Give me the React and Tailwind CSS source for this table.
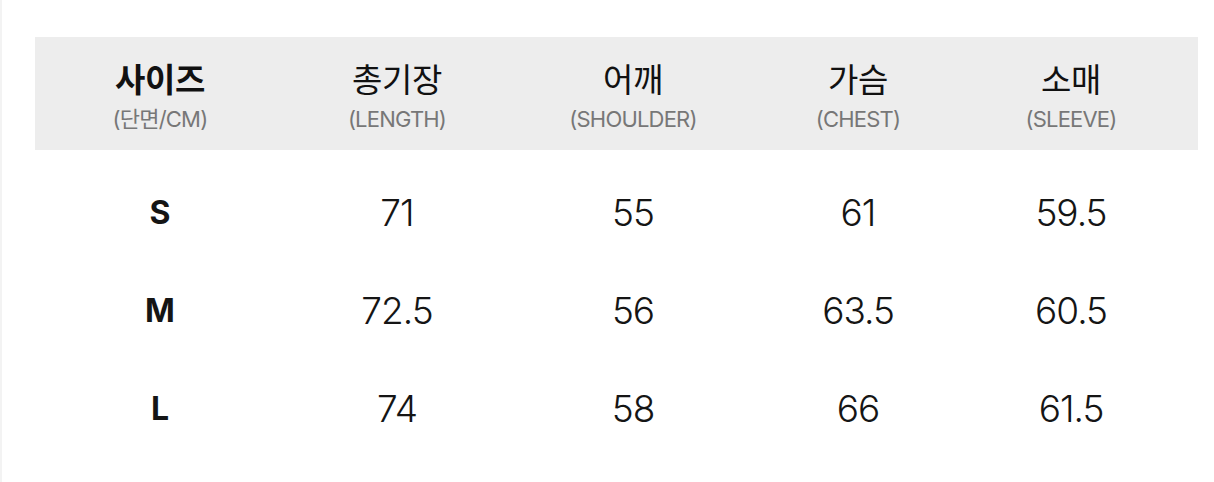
const columns = [
  { ko: '사이즈', en: '(단면/CM)', bold: true },
  { ko: '총기장', en: '(LENGTH)' },
  { ko: '어깨', en: '(SHOULDER)' },
  { ko: '가슴', en: '(CHEST)' },
  { ko: '소매', en: '(SLEEVE)' },
];

const rows = [
  ['S', '71', '55', '61', '59.5'],
  ['M', '72.5', '56', '63.5', '60.5'],
  ['L', '74', '58', '66', '61.5'],
];

const grid = 'grid grid-cols-[250px_224px_248px_202px_224px]';
const font = "font-['Inter','Noto_Sans_CJK_KR',sans-serif]";

const App = () => {
  return (
    <div className={`w-[1214px] h-[482px] bg-white border-l-2 border-[#f3f3f3] ${font}`}>
      <div className="pl-[33px] pt-[37px] w-[1196px]">
        {/* Header */}
        <div className={`${grid} h-[113px] bg-[#ededed] items-center`}>
          {columns.map((c) => (
            <div key={c.ko} className="flex flex-col items-center pt-[4px]">
              <span
                className={`text-[33px] leading-[40px] tracking-[-0.3px] text-[#111] font-['Noto_Sans_CJK_KR',sans-serif] ${
                  c.bold ? 'font-bold' : 'font-normal'
                }`}
              >
                {c.ko}
              </span>
              <span className="mt-[6px] text-[22px] leading-[30px] tracking-[-0.8px] text-[#777] font-normal">
                {c.en}
              </span>
            </div>
          ))}
        </div>

        {/* Rows */}
        <div className="pt-[14px]">
          {rows.map((r) => (
            <div key={r[0]} className={`${grid} h-[98px] items-center`}>
              {r.map((v, i) => (
                <div
                  key={i}
                  className={`text-center text-[#151515] ${
                    i === 0 ? 'text-[32px] font-bold' : 'text-[37px] font-light tracking-[-1px]'
                  }`}
                >
                  {v}
                </div>
              ))}
            </div>
          ))}
        </div>
      </div>
    </div>
  );
};

export default App;
